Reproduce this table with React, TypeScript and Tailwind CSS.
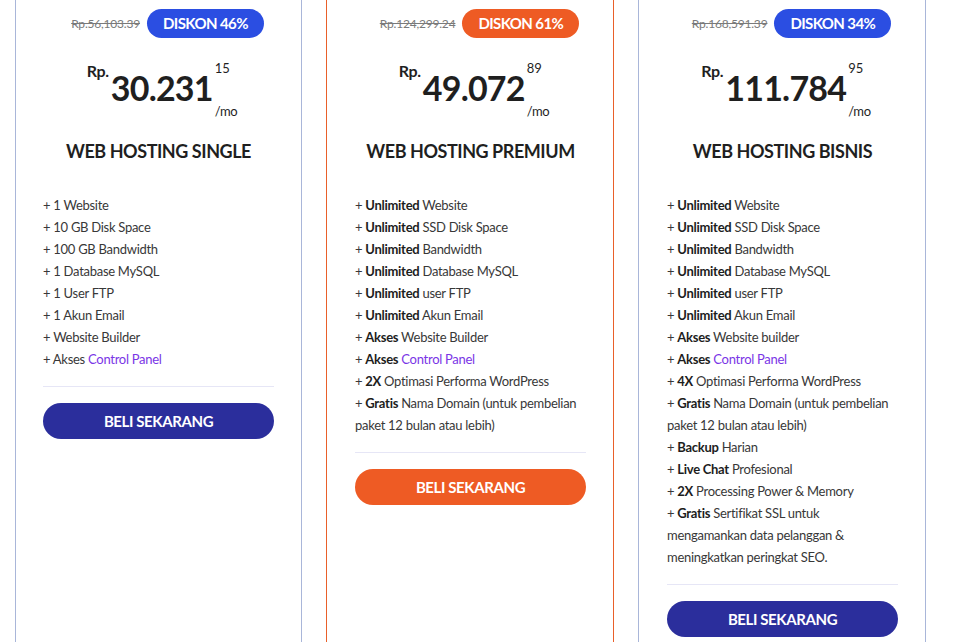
import React from "react";

type Plan = {
  old: string;
  disc: string;
  whole: string;
  cents: string;
  title: string;
  accent: "blue" | "orange";
  w: string;
  lines: React.ReactNode[];
};

const Link = ({ children }: { children: React.ReactNode }) => (
  <span className="text-[#7a35e6]">{children}</span>
);

const B = ({ children }: { children: React.ReactNode }) => (
  <span className="font-bold text-[#1d1d1d]">{children}</span>
);

const plans: Plan[] = [
  {
    old: "Rp.56,103.39",
    disc: "DISKON 46%",
    whole: "30.231",
    cents: "15",
    title: "WEB HOSTING SINGLE",
    accent: "blue",
    w: "w-[287px] pl-[27px] pr-[27px]",
    lines: [
      <>+ 1 Website</>,
      <>+ 10 GB Disk Space</>,
      <>+ 100 GB Bandwidth</>,
      <>+ 1 Database MySQL</>,
      <>+ 1 User FTP</>,
      <>+ 1 Akun Email</>,
      <>+ Website Builder</>,
      <>+ Akses <Link>Control Panel</Link></>,
    ],
  },
  {
    old: "Rp.124,299.24",
    disc: "DISKON 61%",
    whole: "49.072",
    cents: "89",
    title: "WEB HOSTING PREMIUM",
    accent: "orange",
    w: "w-[288px] pl-[28px] pr-[27px]",
    lines: [
      <>+ <B>Unlimited</B> Website</>,
      <>+ <B>Unlimited</B> SSD Disk Space</>,
      <>+ <B>Unlimited</B> Bandwidth</>,
      <>+ <B>Unlimited</B> Database MySQL</>,
      <>+ <B>Unlimited</B> user FTP</>,
      <>+ <B>Unlimited</B> Akun Email</>,
      <>+ <B>Akses</B> Website Builder</>,
      <>+ <B>Akses</B> <Link>Control Panel</Link></>,
      <>+ <B>2X</B> Optimasi Performa WordPress</>,
      <>+ <B>Gratis</B> Nama Domain (untuk pembelian</>,
      <>paket 12 bulan atau lebih)</>,
    ],
  },
  {
    old: "Rp.168,591.39",
    disc: "DISKON 34%",
    whole: "111.784",
    cents: "95",
    title: "WEB HOSTING BISNIS",
    accent: "blue",
    w: "w-[288px] pl-[28px] pr-[27px]",
    lines: [
      <>+ <B>Unlimited</B> Website</>,
      <>+ <B>Unlimited</B> SSD Disk Space</>,
      <>+ <B>Unlimited</B> Bandwidth</>,
      <>+ <B>Unlimited</B> Database MySQL</>,
      <>+ <B>Unlimited</B> user FTP</>,
      <>+ <B>Unlimited</B> Akun Email</>,
      <>+ <B>Akses</B> Website builder</>,
      <>+ <B>Akses</B> <Link>Control Panel</Link></>,
      <>+ <B>4X</B> Optimasi Performa WordPress</>,
      <>+ <B>Gratis</B> Nama Domain (untuk pembelian</>,
      <>paket 12 bulan atau lebih)</>,
      <>+ <B>Backup</B> Harian</>,
      <>+ <B>Live Chat</B> Profesional</>,
      <>+ <B>2X</B> Processing Power &amp; Memory</>,
      <>+ <B>Gratis</B> Sertifikat SSL untuk</>,
      <>mengamankan data pelanggan &amp;</>,
      <>meningkatkan peringkat SEO.</>,
    ],
  },
];

function Card({ p }: { p: Plan }) {
  const orange = p.accent === "orange";
  return (
    <div
      className={
        p.w +
        " shrink-0 border-x pt-[9px] pb-[30px] " +
        (orange ? "border-[#e9602a]" : "border-[#a9b6d9]")
      }
    >
      <div className="flex items-center justify-center pl-[18px]">
        <span className="text-[12px] leading-none tracking-[-0.2px] text-[#7a7a7a] line-through">
          {p.old}
        </span>
        <span
          className={
            "ml-[7px] flex h-[29px] items-center rounded-full px-[16px] text-[15px] font-bold tracking-[-0.6px] text-white " +
            (orange ? "bg-[#ee5b24]" : "bg-[#2b4ee2]")
          }
        >
          {p.disc}
        </span>
      </div>
      <div className="mt-[22px] flex h-[60px] items-start justify-center pl-[7px] text-[#1f1f1f]">
        <span className="mt-[3px] text-[16px] font-bold leading-none tracking-[-0.3px]">Rp.</span>
        <span className="ml-[2px] mt-[11px] text-[34px] font-bold leading-none tracking-[-0.8px]">
          {p.whole}
        </span>
        <span className="ml-[2px] flex flex-col">
          <span className="mt-[2px] text-[13px] leading-none">{p.cents}</span>
          <span className="mt-[30px] text-[13px] leading-none tracking-[-0.3px]">/mo</span>
        </span>
      </div>
      <div className="mt-[19px] text-center text-[18px] font-bold leading-[24px] tracking-[-0.45px] text-[#1f1f1f]">
        {p.title}
      </div>
      <div className="mt-[31px] text-[13px] leading-[22px] tracking-[-0.28px] text-[#383838]">
        {p.lines.map((l, i) => (
          <div key={i} className="whitespace-nowrap">
            {l}
          </div>
        ))}
      </div>
      <div className="mt-[16px] h-px bg-[#e6e6f6]" />
      <button
        className={
          "mt-[16px] flex h-[36px] w-full items-center justify-center rounded-full text-[15px] font-bold tracking-[-0.4px] text-white " +
          (orange ? "bg-[#ee5b24]" : "bg-[#2b2e9c]")
        }
      >
        BELI SEKARANG
      </button>
    </div>
  );
}

export default function App() {
  return (
    <div
      className="min-h-[642px] w-[965px] bg-white"
      style={{ fontFamily: "Lato, 'Noto Sans', sans-serif" }}
    >
      <div className="flex items-stretch gap-[24px] pl-[15px]">
        {plans.map((p, i) => (
          <Card key={i} p={p} />
        ))}
      </div>
    </div>
  );
}
